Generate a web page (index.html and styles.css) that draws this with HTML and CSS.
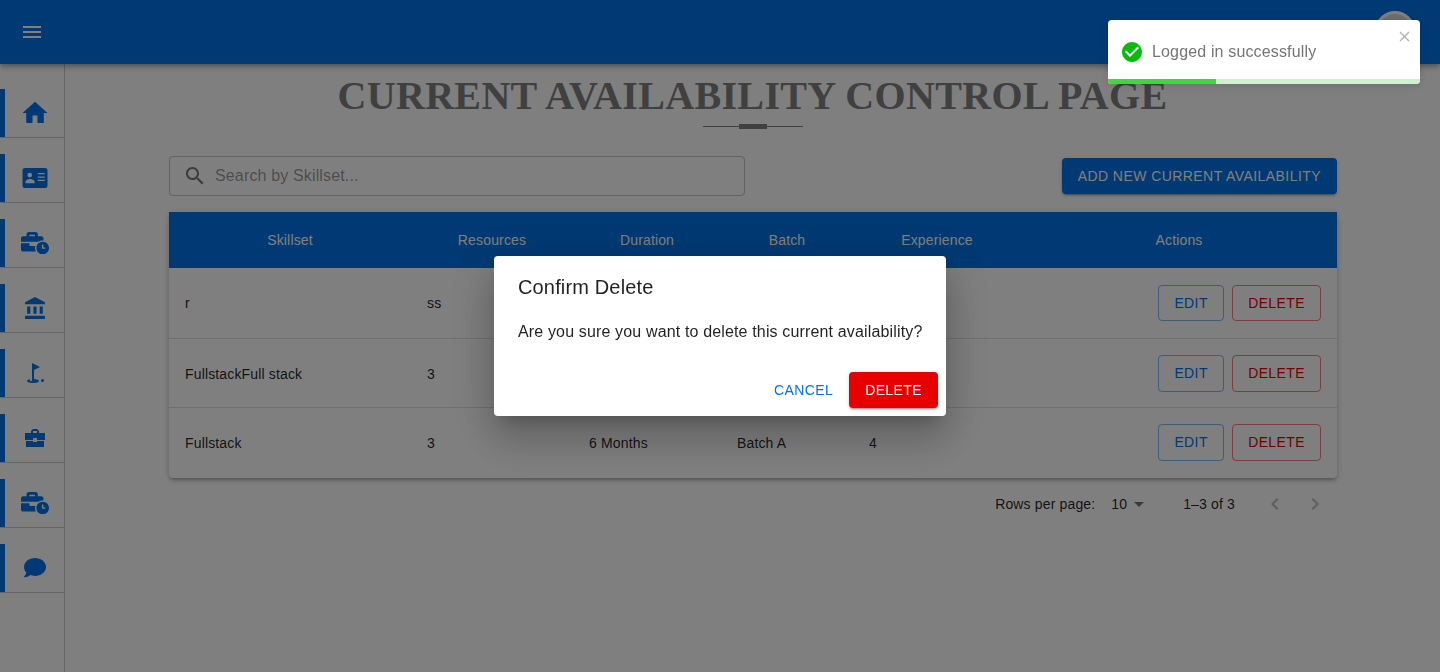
FILE: index.html
```html
<!DOCTYPE html>
<html>
	<head>
		<meta charset="utf-8">
		<title>Current Availability Control Page</title>
		<link rel="stylesheet" href="styles.css">
	</head>
	<body>
		<header class="app-bar">
			<svg class="menu-icon" viewBox="0 0 24 24"><path d="M3 18h18v-2H3v2zm0-5h18v-2H3v2zm0-7v2h18V6H3z"/></svg>
			<div class="avatar"></div>
		</header>

		<div class="shell">
			<nav class="sidebar">
				<div class="nav-item"><a class="nav-link">
					<svg class="icon-30" viewBox="0 0 24 24"><path d="M10 20v-6h4v6h5v-8h3L12 3 2 12h3v8z"/></svg>
				</a></div>
				<div class="nav-item"><a class="nav-link">
					<svg class="icon-30" viewBox="0 0 24 24"><path fill-rule="evenodd" d="M4 4h16a2 2 0 0 1 2 2v12a2 2 0 0 1-2 2H4a2 2 0 0 1-2-2V6a2 2 0 0 1 2-2zm3.8 3.7a1.9 1.9 0 1 0 0 3.8 1.9 1.9 0 0 0 0-3.8zM4.4 16.2h7.4v-1.1c0-1.5-2.2-2.3-3.7-2.3s-3.7.8-3.7 2.3zM14.2 8v1h5.6V8zm0 2.7v1h5.6v-1zm0 2.6v1h5.6v-1z"/></svg>
				</a></div>
				<div class="nav-item"><a class="nav-link">
					<svg class="icon-case" viewBox="0 0 640 512"><path d="M496 224c-79.59 0-144 64.41-144 144s64.41 144 144 144 144-64.41 144-144-64.41-144-144-144zm64 150.29c0 5.34-4.37 9.71-9.71 9.71h-60.57c-5.34 0-9.71-4.37-9.71-9.71v-76.57c0-5.34 4.37-9.71 9.71-9.71h12.57c5.34 0 9.71 4.37 9.71 9.71V352h38.29c5.34 0 9.71 4.37 9.71 9.71v12.58zM496 192c5.4 0 10.72.33 16 .81V144c0-25.6-22.4-48-48-48h-80V48c0-25.6-22.4-48-48-48H176c-25.6 0-48 22.4-48 48v48H48c-25.6 0-48 22.4-48 48v80h395.12c28.6-20.09 63.35-32 100.88-32zM320 96H192V64h128v32zm6.82 224H208c-8.84 0-16-7.16-16-16v-48H0v144c0 25.6 22.4 48 48 48h291.43C327.1 423.96 320 396.82 320 368c0-16.66 2.48-32.72 6.82-48z"/></svg>
				</a></div>
				<div class="nav-item"><a class="nav-link">
					<svg class="icon-25" viewBox="0 0 24 24"><path d="M4 10v7h3v-7H4zm6 0v7h3v-7h-3zM2 22h19v-3H2v3zm14-12v7h3v-7h-3zm-4.5-9L2 6v2h19V6l-9.5-5z"/></svg>
				</a></div>
				<div class="nav-item"><a class="nav-link">
					<svg class="icon-24" viewBox="0 0 24 24"><circle cx="19.5" cy="19.5" r="1.5"/><path d="M17 5.92 9 2v18H7v-1.73c-1.79.35-3 .99-3 1.73 0 1.1 2.69 2 6 2s6-.9 6-2c0-.99-2.16-1.81-5-1.97V8.98l6-3.06z"/></svg>
				</a></div>
				<div class="nav-item"><a class="nav-link">
					<svg class="icon-24" viewBox="0 0 24 24"><path d="M10 16v-1H3.01L3 21h18v-6h-7v1h-4zm10-9h-4.01V5l-2-2h-4l-2 2v2H2v7h8v-2h4v2h8V7h-2zm-6 0h-4V5h4v2z"/></svg>
				</a></div>
				<div class="nav-item"><a class="nav-link">
					<svg class="icon-case" viewBox="0 0 640 512"><path d="M496 224c-79.59 0-144 64.41-144 144s64.41 144 144 144 144-64.41 144-144-64.41-144-144-144zm64 150.29c0 5.34-4.37 9.71-9.71 9.71h-60.57c-5.34 0-9.71-4.37-9.71-9.71v-76.57c0-5.34 4.37-9.71 9.71-9.71h12.57c5.34 0 9.71 4.37 9.71 9.71V352h38.29c5.34 0 9.71 4.37 9.71 9.71v12.58zM496 192c5.4 0 10.72.33 16 .81V144c0-25.6-22.4-48-48-48h-80V48c0-25.6-22.4-48-48-48H176c-25.6 0-48 22.4-48 48v48H48c-25.6 0-48 22.4-48 48v80h395.12c28.6-20.09 63.35-32 100.88-32zM320 96H192V64h128v32zm6.82 224H208c-8.84 0-16-7.16-16-16v-48H0v144c0 25.6 22.4 48 48 48h291.43C327.1 423.96 320 396.82 320 368c0-16.66 2.48-32.72 6.82-48z"/></svg>
				</a></div>
				<div class="nav-item"><a class="nav-link">
					<svg class="icon-chat" viewBox="0 0 512 448"><path d="M256 0C114.6 0 0 93.1 0 208c0 49.6 21.4 95 57 130.7C44.5 389.1 2.7 434 2.2 434.5c-2.2 2.3-2.8 5.7-1.5 8.7S4.8 448 8 448c66.3 0 116-31.8 140.6-51.4 32.7 12.3 69 19.4 107.4 19.4 141.4 0 256-93.1 256-208S397.4 0 256 0z"/></svg>
				</a></div>
			</nav>

			<main class="content">
				<h1 class="page-title">CURRENT AVAILABILITY CONTROL PAGE</h1>
				<div class="title-rule"><span class="title-rule-mark"></span></div>

				<div class="toolbar">
					<div class="search">
						<svg class="search-icon" viewBox="0 0 24 24"><path d="M15.5 14h-.79l-.28-.27C15.41 12.59 16 11.11 16 9.5 16 5.91 13.09 3 9.5 3S3 5.91 3 9.5 5.91 16 9.5 16c1.61 0 3.09-.59 4.23-1.57l.27.28v.79l5 4.99L20.49 19l-4.99-5zm-6 0C7.01 14 5 11.99 5 9.5S7.01 5 9.5 5 14 7.01 14 9.5 11.99 14 9.5 14z"/></svg>
						<span class="search-placeholder">Search by Skillset...</span>
					</div>
					<button class="btn btn-primary">Add New Current Availability</button>
				</div>

				<div class="paper">
					<table class="data-table">
						<thead>
							<tr>
								<th class="col-skill">Skillset</th>
								<th class="col-res">Resources</th>
								<th class="col-dur">Duration</th>
								<th class="col-batch">Batch</th>
								<th class="col-exp">Experience</th>
								<th>Actions</th>
							</tr>
						</thead>
						<tbody>
							<tr>
								<td>r</td>
								<td>ss</td>
								<td></td>
								<td></td>
								<td></td>
								<td><div class="actions"><button class="btn btn-edit">Edit</button><button class="btn btn-delete">Delete</button></div></td>
							</tr>
							<tr>
								<td>FullstackFull stack</td>
								<td>3</td>
								<td></td>
								<td></td>
								<td></td>
								<td><div class="actions"><button class="btn btn-edit">Edit</button><button class="btn btn-delete">Delete</button></div></td>
							</tr>
							<tr>
								<td>Fullstack</td>
								<td>3</td>
								<td>6 Months</td>
								<td>Batch A</td>
								<td>4</td>
								<td><div class="actions"><button class="btn btn-edit">Edit</button><button class="btn btn-delete">Delete</button></div></td>
							</tr>
						</tbody>
					</table>
				</div>

				<div class="pagination">
					<span>Rows per page:</span>
					<span class="rows-select">10<svg class="select-arrow" viewBox="0 0 24 24"><path d="M7 10l5 5 5-5z"/></svg></span>
					<span class="range">1–3 of 3</span>
					<svg class="page-btn" viewBox="0 0 24 24"><path d="M15.41 7.41 14 6l-6 6 6 6 1.41-1.41L10.83 12z"/></svg>
					<svg class="page-btn" viewBox="0 0 24 24"><path d="M10 6 8.59 7.41 13.17 12l-4.58 4.59L10 18l6-6z"/></svg>
				</div>
			</main>
		</div>

		<div class="backdrop">
			<div class="dialog">
				<h2 class="dialog-title">Confirm Delete</h2>
				<p class="dialog-text">Are you sure you want to delete this current availability?</p>
				<div class="dialog-actions">
					<button class="btn btn-text">Cancel</button>
					<button class="btn btn-danger">Delete</button>
				</div>
			</div>
		</div>

		<div class="toast">
			<div class="toast-body">
				<svg class="toast-check" viewBox="0 0 24 24"><circle cx="12" cy="12" r="7" fill="#fff"/><path d="M12 2C6.47 2 2 6.47 2 12s4.47 10 10 10 10-4.47 10-10S17.53 2 12 2zm-2 15l-5-5 1.41-1.41L10 14.17l7.59-7.59L19 8l-9 9z"/></svg>
				<span class="toast-text">Logged in successfully</span>
				<svg class="toast-close" viewBox="0 0 24 24"><path d="M19 6.41 17.59 5 12 10.59 6.41 5 5 6.41 10.59 12 5 17.59 6.41 19 12 13.41 17.59 19 19 17.59 13.41 12z"/></svg>
			</div>
			<div class="toast-track"><div class="toast-bar" style="width: 34.6%"></div></div>
		</div>
	</body>
</html>
```

FILE: styles.css
```css
* {
	box-sizing: border-box;
}
html, body {
	height: 100%;
}
body {
	margin: 0;
	overflow: hidden;
	background: #fff;
	color: rgba(0, 0, 0, 0.87);
	font-family: "Liberation Sans", Arial, sans-serif;
	font-size: 14px;
}
svg {
	display: block;
	fill: currentColor;
}

/* top bar */
.app-bar {
	position: relative;
	z-index: 2;
	display: flex;
	align-items: center;
	justify-content: space-between;
	height: 64px;
	padding: 0 25px 0 20px;
	background: #0073e6;
	color: #fff;
	box-shadow: 0 2px 4px -1px rgba(0, 0, 0, 0.2), 0 4px 5px 0 rgba(0, 0, 0, 0.14), 0 1px 10px 0 rgba(0, 0, 0, 0.12);
}
.menu-icon {
	width: 24px;
	height: 24px;
}
.avatar {
	width: 40px;
	height: 40px;
	margin-top: -2px;
	border: 3px solid #fff;
	border-radius: 50%;
	background: #dcdcdc;
}

/* side navigation */
.shell {
	display: flex;
	height: 608px;
}
.sidebar {
	flex: none;
	width: 65px;
	padding-top: 9px;
	border-right: 1px solid #ccc;
}
.nav-item {
	margin-top: 16px;
	border-bottom: 1px solid #ccc;
}
.nav-link {
	display: flex;
	align-items: center;
	justify-content: center;
	height: 48px;
	border-left: 5px solid #0073e6;
	color: #0073e6;
}
.icon-30 {
	width: 30px;
	height: 30px;
}
.icon-25 {
	width: 25px;
	height: 25px;
	margin-left: 2px;
}
.icon-24 {
	width: 24px;
	height: 24px;
}
.icon-case {
	width: 28px;
	height: 22.4px;
}
.icon-chat {
	width: 22px;
	height: 19.25px;
}

/* page content */
.content {
	flex: 1;
	min-width: 0;
	padding-left: 104px;
}
.page-title {
	margin: 8px 0 0 -104px;
	font-family: "Liberation Serif", "Times New Roman", serif;
	font-size: 40px;
	font-weight: bold;
	line-height: 48px;
	letter-spacing: 0.33px;
	text-align: center;
	color: #808080;
}
.title-rule {
	position: relative;
	width: 100px;
	height: 1px;
	margin: 6px 0 29px 534px;
	background: #808080;
}
.title-rule-mark {
	position: absolute;
	left: 36px;
	top: -2px;
	width: 28px;
	height: 5px;
	background: #808080;
}
.toolbar {
	display: flex;
	align-items: center;
	justify-content: space-between;
	width: 1168px;
	height: 40px;
	margin-bottom: 16px;
}
.search {
	display: flex;
	align-items: center;
	width: 576px;
	height: 40px;
	padding-left: 13px;
	border: 1px solid #c4c4c4;
	border-radius: 4px;
	background: #fff;
}
.search-icon {
	width: 24px;
	height: 24px;
	margin-right: 8px;
	color: rgba(0, 0, 0, 0.54);
}
.search-placeholder {
	font-size: 16px;
	letter-spacing: 0.15px;
	color: rgba(0, 0, 0, 0.42);
}

/* buttons */
.btn {
	padding: 6px 16px;
	border: 0;
	border-radius: 4px;
	background: none;
	font-family: inherit;
	font-size: 14px;
	line-height: 24.5px;
	letter-spacing: 0.4px;
	text-transform: uppercase;
}
.btn-primary {
	background: #0073e6;
	color: #fff;
	letter-spacing: 0.44px;
	box-shadow: 0 3px 1px -2px rgba(0, 0, 0, 0.2), 0 2px 2px 0 rgba(0, 0, 0, 0.14), 0 1px 5px 0 rgba(0, 0, 0, 0.12);
}
.btn-edit {
	min-width: 66px;
	padding: 5px 15px;
	border: 1px solid rgba(0, 115, 230, 0.5);
	color: #0073e6;
}
.btn-delete {
	padding: 5px 15px;
	border: 1px solid rgba(230, 0, 0, 0.5);
	color: #e60000;
}
.btn-text {
	padding: 6px 8px;
	color: #0073e6;
}
.btn-danger {
	height: 36px;
	padding: 0 16px;
	background: #e60000;
	color: #fff;
	box-shadow: 0 3px 1px -2px rgba(0, 0, 0, 0.2), 0 2px 2px 0 rgba(0, 0, 0, 0.14), 0 1px 5px 0 rgba(0, 0, 0, 0.12);
}

/* table */
.paper {
	width: 1168px;
	border-radius: 0 0 4px 4px;
	background: #fff;
	box-shadow: 0 3px 3px -2px rgba(0, 0, 0, 0.2), 0 3px 4px 0 rgba(0, 0, 0, 0.14), 0 1px 8px 0 rgba(0, 0, 0, 0.12);
}
.data-table {
	width: 100%;
	table-layout: fixed;
	border-collapse: separate;
	border-spacing: 0;
}
.data-table th {
	height: 56px;
	padding: 16px;
	background: #0073e6;
	color: #fff;
	font-weight: normal;
	line-height: 24px;
	letter-spacing: 0.15px;
	text-align: center;
}
.data-table td {
	height: 70px;
	padding: 0 16px;
	border-bottom: 1px solid #e0e0e0;
	line-height: 20px;
	letter-spacing: 0.15px;
}
.data-table tr:first-child td {
	height: 71px;
}
.data-table tr:nth-child(2) td {
	height: 69px;
	padding-top: 1px;
}
.data-table tr:last-child td {
	border-bottom-color: transparent;
}
.col-skill {
	width: 242px;
}
.col-res {
	width: 162px;
}
.col-dur {
	width: 148px;
}
.col-batch {
	width: 132px;
}
.col-exp {
	width: 168px;
}
.actions {
	display: flex;
	justify-content: flex-end;
	gap: 8px;
}

/* pagination */
.pagination {
	display: flex;
	align-items: center;
	justify-content: flex-end;
	width: 1168px;
	height: 52px;
	padding-right: 2px;
	letter-spacing: 0.15px;
}
.rows-select {
	display: flex;
	align-items: center;
	margin: 0 32px 0 16px;
}
.select-arrow {
	width: 24px;
	height: 24px;
	color: rgba(0, 0, 0, 0.54);
}
.range {
	margin-right: 20px;
}
.page-btn {
	width: 24px;
	height: 24px;
	margin: 0 8px;
	color: rgba(0, 0, 0, 0.26);
}

/* overlays */
.backdrop {
	position: fixed;
	inset: 0;
	z-index: 10;
	display: flex;
	align-items: center;
	justify-content: center;
	background: rgba(0, 0, 0, 0.5);
}
.dialog {
	width: 452px;
	height: 160px;
	border-radius: 4px;
	background: #fff;
	box-shadow: 0 11px 15px -7px rgba(0, 0, 0, 0.2), 0 24px 38px 3px rgba(0, 0, 0, 0.14), 0 9px 46px 8px rgba(0, 0, 0, 0.12);
}
.dialog-title {
	margin: 0;
	padding: 16px 24px;
	font-size: 20px;
	font-weight: normal;
	line-height: 30px;
	letter-spacing: 0.15px;
}
.dialog-text {
	margin: 2px 0 0;
	padding: 0 24px;
	font-size: 16px;
	line-height: 24px;
	letter-spacing: 0.15px;
	white-space: nowrap;
}
.dialog-actions {
	display: flex;
	justify-content: flex-end;
	align-items: center;
	gap: 8px;
	margin-top: 28px;
	padding: 0 8px;
}
.toast {
	position: fixed;
	top: 20px;
	right: 20px;
	z-index: 20;
	display: flex;
	flex-direction: column;
	width: 312px;
	height: 64px;
	overflow: hidden;
	border-radius: 4px;
	background: #fff;
	box-shadow: 0 1px 10px 0 rgba(0, 0, 0, 0.1), 0 2px 15px 0 rgba(0, 0, 0, 0.05);
}
.toast-body {
	display: flex;
	flex: 1;
	align-items: center;
	padding: 5px 7px 0 12px;
}
.toast-check {
	flex: none;
	width: 24px;
	height: 24px;
	margin-right: 8px;
	color: #07bc0c;
}
.toast-text {
	flex: 1;
	font-size: 16px;
	letter-spacing: 0.15px;
	color: #757575;
}
.toast-close {
	flex: none;
	align-self: flex-start;
	width: 17px;
	height: 17px;
	margin-top: 3px;
	color: #b3b3b3;
}
.toast-track {
	flex: none;
	height: 5px;
	background: #cdf2ce;
}
.toast-bar {
	height: 100%;
	background: #3fd63f;
}
```
